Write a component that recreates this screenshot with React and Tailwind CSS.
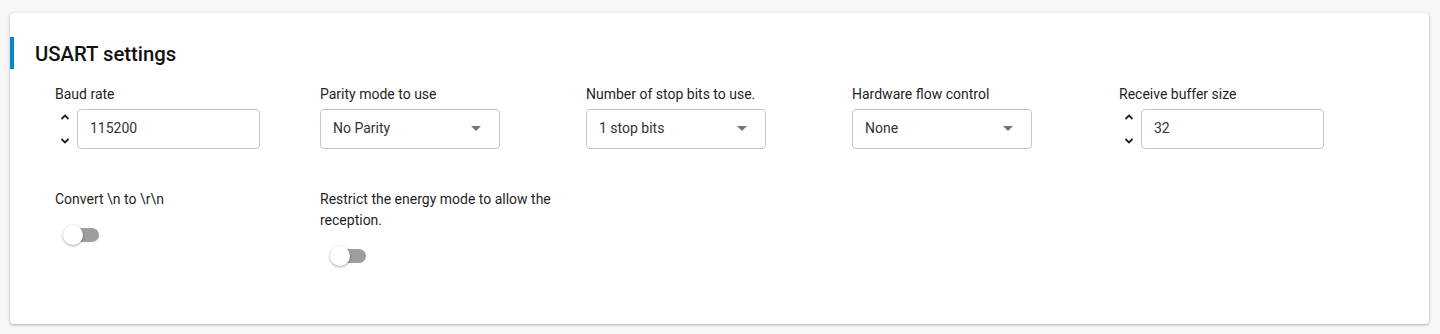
import { useState } from 'react';

const font = { fontFamily: 'Roboto, "Liberation Sans", sans-serif' };

function Stepper() {
  return (
    <div className="flex flex-col justify-between h-[40px] py-[4px] w-[20px] items-center text-[#222]">
      <svg width="10" height="8" viewBox="0 0 10 8"><path d="M1.5 6 L5 2.5 L8.5 6" fill="none" stroke="currentColor" strokeWidth="1.8" /></svg>
      <svg width="10" height="8" viewBox="0 0 10 8"><path d="M1.5 2 L5 5.5 L8.5 2" fill="none" stroke="currentColor" strokeWidth="1.8" /></svg>
    </div>
  );
}

function NumberField({ label, value }) {
  return (
    <div>
      <div className="text-[14px] leading-[20px] text-[#1f1f1f] mb-[5px]">{label}</div>
      <div className="flex items-center gap-[2px]">
        <Stepper />
        <div className="w-[183px] h-[40px] border border-[#c4c4c4] rounded-[4px] flex items-center px-[12px] pb-[1px] text-[14px] text-[#333]">
          {value}
        </div>
      </div>
    </div>
  );
}

function SelectField({ label, value }) {
  return (
    <div>
      <div className="text-[14px] leading-[20px] text-[#1f1f1f] mb-[5px]">{label}</div>
      <div className="w-[180px] h-[40px] border border-[#c4c4c4] rounded-[4px] flex items-center justify-between pl-[12px] pr-[18px] pb-[1px] text-[14px] text-[#333]">
        <span>{value}</span>
        <svg width="10" height="5" viewBox="0 0 10 5"><path d="M0 0 L10 0 L5 5 Z" fill="#757575" /></svg>
      </div>
    </div>
  );
}

function Toggle({ offset }) {
  const [on, setOn] = useState(false);
  return (
    <button type="button" onClick={() => setOn(!on)} className={`relative w-[36px] h-[20px] flex items-center ${offset}`}>
      <span className={`absolute left-[2px] w-[34px] h-[14px] rounded-full ${on ? 'bg-[#81c3ea]' : 'bg-[#9e9e9e]'}`} />
      <span className={`absolute w-[20px] h-[20px] rounded-full shadow-[0_1px_3px_rgba(0,0,0,0.35)] ${on ? 'left-[16px] bg-[#0288d1]' : 'left-0 bg-white'}`} />
    </button>
  );
}

function ToggleField({ label, offset }) {
  return (
    <div className="w-[240px]">
      <div className="text-[14px] leading-[21px] text-[#1f1f1f] mb-[15px]">{label}</div>
      <Toggle offset={offset} />
    </div>
  );
}

export default function App() {
  return (
    <div className="min-h-screen bg-[#f7f7f7] pt-[13px] pl-[10px] pr-[11px]" style={font}>
      <div className="bg-white rounded-[4px] shadow-[0_1px_3px_rgba(0,0,0,0.3)] h-[311px] pt-[24px]">
        <div className="flex items-center h-[32px] border-l-[4px] border-[#0288d1]">
          <h2 className="pl-[21px] pt-[3px] text-[20.3px] font-medium text-[#111]">USART settings</h2>
        </div>

        <div className="pl-[45px] pt-[15px]">
          <div className="grid grid-cols-[265px_266px_266px_267px_266px]">
            <NumberField label="Baud rate" value="115200" />
            <SelectField label="Parity mode to use" value="No Parity" />
            <SelectField label="Number of stop bits to use." value="1 stop bits" />
            <SelectField label="Hardware flow control" value="None" />
            <NumberField label="Receive buffer size" value="32" />
          </div>

          <div className="grid grid-cols-[265px_266px] mt-[40px]">
            <ToggleField label="Convert \n to \r\n" offset="ml-[8px]" />
            <ToggleField label="Restrict the energy mode to allow the reception." offset="ml-[10px]" />
          </div>
        </div>
      </div>
    </div>
  );
}
